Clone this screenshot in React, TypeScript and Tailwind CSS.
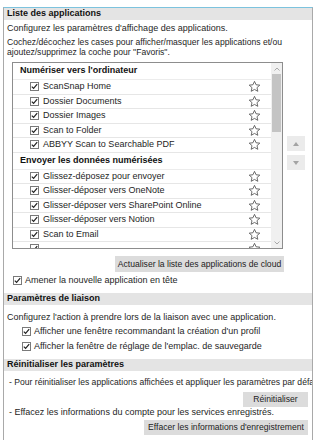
import React from "react";

const font = { fontFamily: '"Liberation Sans", Arial, sans-serif' };

function Check({ className = "" }: { className?: string }) {
  return (
    <span
      className={`flex h-[9px] w-[9px] shrink-0 items-center justify-center border border-[#7a7a7a] bg-white ${className}`}
    >
      <svg width="7" height="7" viewBox="0 0 7 7">
        <path d="M0.8 3.6 L2.6 5.4 L6.2 1.2" fill="none" stroke="#222" strokeWidth="1.2" />
      </svg>
    </span>
  );
}

function Star() {
  return (
    <svg width="13" height="13" viewBox="0 0 24 24" className="shrink-0">
      <path
        d="M12 2.5l2.9 6.3 6.9.7-5.2 4.6 1.5 6.8L12 17.4l-6.1 3.5 1.5-6.8-5.2-4.6 6.9-.7z"
        fill="none"
        stroke="#555"
        strokeWidth="1.6"
        strokeLinejoin="round"
      />
    </svg>
  );
}

const groups = [
  {
    title: "Numériser vers l'ordinateur",
    items: [
      "ScanSnap Home",
      "Dossier Documents",
      "Dossier Images",
      "Scan to Folder",
      "ABBYY Scan to Searchable PDF",
    ],
  },
  {
    title: "Envoyer les données numérisées",
    items: [
      "Glissez-déposez pour envoyer",
      "Glisser-déposer vers OneNote",
      "Glisser-déposer vers SharePoint Online",
      "Glisser-déposer vers Notion",
      "Scan to Email",
      "",
    ],
  },
];

function SectionHeader({ children }: { children: React.ReactNode }) {
  return (
    <div className="flex h-[12px] items-center bg-[#e4e4e4] pl-[3px] text-[9px] font-bold text-[#111]">
      {children}
    </div>
  );
}

function Button({ children, className = "" }: { children: React.ReactNode; className?: string }) {
  return (
    <div
      className={`flex items-center justify-center whitespace-nowrap bg-[#dcdcdc] text-[8.6px] text-[#222] ${className}`}
    >
      {children}
    </div>
  );
}

export default function App() {
  return (
    <div className="h-[448px] w-[315px] overflow-hidden bg-white pt-[7px]" style={font}>
      <div className="ml-[3px] flex h-[433px] w-[310px] flex-col overflow-hidden border-x border-t border-x-[#a9a9a9] border-t-[#7cc3de] text-[#1e1e1e]">
        <SectionHeader>Liste des applications</SectionHeader>

        <div className="mt-[3px] pl-[3px] text-[9px] leading-[11px]">
          Configurez les paramètres d'affichage des applications.
        </div>
        <div className="mt-[3px] whitespace-nowrap pl-[3px] text-[8.6px] leading-[10px]">
          Cochez/décochez les cases pour afficher/masquer les applications et/ou
          <br />
          ajoutez/supprimez la coche pour "Favoris".
        </div>

        <div className="mt-[5px] flex items-start">
          <div className="ml-[8px] flex h-[187px] w-[271px] border border-[#8d8d8d]">
            <div className="flex-1 overflow-hidden">
              {groups.map((g) => (
                <div key={g.title}>
                  <div className="flex h-[17px] items-center border-b border-[#ececec] pl-[7px] text-[9px] font-bold text-[#111]">
                    {g.title}
                  </div>
                  {g.items.map((item, i) => (
                    <div
                      key={item + i}
                      className="flex h-[14.5px] items-center border-b border-[#e6e6e6] pl-[17px] pr-[10px] text-[9px]"
                    >
                      <Check />
                      <span className="ml-[4px] flex-1 whitespace-nowrap">{item}</span>
                      <Star />
                    </div>
                  ))}
                </div>
              ))}
            </div>
            <div className="flex w-[11px] flex-col bg-[#f0f0f0]">
              <div className="flex h-[11px] items-center justify-center">
                <svg width="6" height="4" viewBox="0 0 6 4">
                  <path d="M0.5 3.5 L3 1 L5.5 3.5" fill="none" stroke="#a8a8a8" strokeWidth="1" />
                </svg>
              </div>
              <div className="mx-[1px] h-[58px] bg-[#c4c4c4]" />
              <div className="flex-1" />
              <div className="flex h-[11px] items-center justify-center">
                <svg width="6" height="4" viewBox="0 0 6 4">
                  <path d="M0.5 0.5 L3 3 L5.5 0.5" fill="none" stroke="#a8a8a8" strokeWidth="1" />
                </svg>
              </div>
            </div>
          </div>
          <div className="ml-[4px] mt-[74px] flex flex-col gap-[4px]">
            <div className="flex h-[15px] w-[18px] items-center justify-center bg-[#ebebeb]">
              <svg width="6" height="4" viewBox="0 0 6 4">
                <path d="M0 4 L3 0 L6 4 Z" fill="#a3a3a3" />
              </svg>
            </div>
            <div className="flex h-[15px] w-[18px] items-center justify-center bg-[#ebebeb]">
              <svg width="6" height="4" viewBox="0 0 6 4">
                <path d="M0 0 L6 0 L3 4 Z" fill="#a3a3a3" />
              </svg>
            </div>
          </div>
        </div>

        <div className="mt-[7px] flex w-[280px] justify-end">
          <Button className="h-[16px] w-[169px]">
            Actualiser la liste des applications de cloud
          </Button>
        </div>

        <div className="mt-[3px] flex h-[11px] items-center pl-[9px] text-[9px]">
          <Check />
          <span className="ml-[3px]">Amener la nouvelle application en tête</span>
        </div>

        <div className="mt-[7px]">
          <SectionHeader>Paramètres de liaison</SectionHeader>
        </div>
        <div className="mt-[7px] pl-[3px] text-[9px] leading-[11px]">
          Configurez l'action à prendre lors de la liaison avec une application.
        </div>
        <div className="mt-[3px] flex h-[11px] items-center pl-[18px] text-[9px]">
          <Check />
          <span className="ml-[3px]">Afficher une fenêtre recommandant la création d'un profil</span>
        </div>
        <div className="mt-[4px] flex h-[11px] items-center pl-[18px] text-[9px]">
          <Check />
          <span className="ml-[3px]">Afficher la fenêtre de réglage de l'emplac. de sauvegarde</span>
        </div>

        <div className="mt-[7px]">
          <SectionHeader>Réinitialiser les paramètres</SectionHeader>
        </div>
        <div className="mt-[6px] whitespace-nowrap pl-[5px] text-[8.6px] leading-[11px]">
          - Pour réinitialiser les applications affichées et appliquer les paramètres par défa
        </div>
        <div className="mt-[4px] flex justify-end pr-[4px]">
          <Button className="h-[15px] w-[65px]">Réinitialiser</Button>
        </div>
        <div className="mt-[0px] pl-[5px] text-[9px] leading-[11px]">
          - Effacez les informations du compte pour les services enregistrés.
        </div>
        <div className="mt-[2px] flex justify-end pr-[4px]">
          <Button className="h-[15px] w-[164px]">Effacer les informations d'enregistrement</Button>
        </div>
      </div>
    </div>
  );
}
